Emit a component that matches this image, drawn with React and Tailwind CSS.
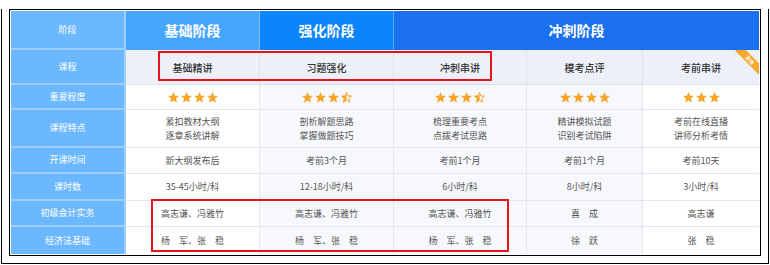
import React from "react";

const STAR = "5,0.4 6.25,3.55 9.6,3.75 7,5.95 7.85,9.3 5,7.45 2.15,9.3 3,5.95 0.4,3.75 3.75,3.55";

function Star({ half }) {
  if (half) {
    return (
      <svg width="11" height="11" viewBox="0 0 10 10">
        <defs>
          <clipPath id="halfclip">
            <rect x="0" y="0" width="5" height="10" />
          </clipPath>
        </defs>
        <polygon points={STAR} fill="none" stroke="#f4a426" strokeWidth="0.9" strokeLinejoin="round" />
        <polygon points={STAR} fill="#f4a426" clipPath="url(#halfclip)" />
      </svg>
    );
  }
  return (
    <svg width="11" height="11" viewBox="0 0 10 10">
      <polygon points={STAR} fill="#f4a426" stroke="#f4a426" strokeWidth="0.4" strokeLinejoin="round" />
    </svg>
  );
}

function Stars({ full, half }) {
  const arr = [];
  for (let i = 0; i < full; i++) arr.push(<Star key={i} />);
  if (half) arr.push(<Star key="h" half />);
  return <div className="flex items-center gap-[2px]">{arr}</div>;
}

const labels = ["重要程度", "课程特点", "开课时间", "课时数", "初级会计实务", "经济法基础"];

const data = [
  [
    <Stars full={4} />,
    <Stars full={3} half />,
    <Stars full={3} half />,
    <Stars full={4} />,
    <Stars full={3} />,
  ],
  [
    ["紧扣教材大纲", "逐章系统讲解"],
    ["剖析解题思路", "掌握做题技巧"],
    ["梳理重要考点", "点拨考试思路"],
    ["精讲模拟试题", "识别考试陷阱"],
    ["考前在线直播", "讲师分析考情"],
  ],
  ["新大纲发布后", "考前3个月", "考前1个月", "考前1个月", "考前10天"],
  ["35-45小时/科", "12-18小时/科", "6小时/科", "8小时/科", "3小时/科"],
  ["高志谦、冯雅竹", "高志谦、冯雅竹", "高志谦、冯雅竹", "喜\u3000成", "高志谦"],
  ["杨\u3000军、张\u3000稳", "杨\u3000军、张\u3000稳", "杨\u3000军、张\u3000稳", "徐\u3000跃", "张\u3000稳"],
];

const colBg = ["bg-white", "bg-[#f7f8fb]", "bg-[#f7f8fb]", "bg-[#f7f8fb]", "bg-white"];

export default function App() {
  return (
    <div className="w-[770px] h-[265px] bg-white pt-[9px] pl-[1px] font-['Noto_Sans_CJK_SC',sans-serif]">
      <div className="w-[768px] h-[255px] border-x border-b border-black">
        <div className="ml-[7px] w-[752px] h-[247px] border border-black p-px">
          <div className="relative grid grid-cols-[115px_134px_134px_133px_116px_116px] grid-rows-[39px_35px_25px_38px_26px_27px_26px_27px] w-[748px] h-[243px] border-r border-b border-[#dde1ea]">
            {/* header row */}
            <div className="flex items-center justify-center bg-[#6bb8ff] text-white text-[9px] border-r-2 border-b-2 border-[#9fcfff]">阶段</div>
            <div className="flex items-center justify-center bg-[#46a6ff] text-white text-[14px] font-bold border-r border-[#7cc0ff]">基础阶段</div>
            <div className="flex items-center justify-center bg-[#0a85fc] text-white text-[14px] font-bold border-r border-[#5aa8ff]">强化阶段</div>
            <div className="col-span-3 flex items-center justify-center bg-[#1b70f0] text-white text-[14px] font-bold">冲刺阶段</div>

            {/* course row */}
            <div className="flex items-center justify-center bg-[#6bb8ff] text-white text-[9px] border-r-2 border-b-2 border-[#9fcfff]">课程</div>
            {["基础精讲", "习题强化", "冲刺串讲", "模考点评", "考前串讲"].map((t, i) => (
              <div
                key={t}
                className={
                  "relative overflow-hidden flex items-center justify-center bg-[#eef0f7] text-[#333] text-[10px] font-medium border-b border-[#dfe2ea] " +
                  (i < 4 ? "border-r" : "")
                }
              >
                {t}
                {i === 4 && (
                  <div className="absolute -right-[8px] top-[6px] w-[34px] h-[8px] rotate-45 bg-[#f5a92f] text-white text-[5px] leading-[8px] text-center">
                    直播
                  </div>
                )}
              </div>
            ))}

            {/* data rows */}
            {labels.map((label, r) => (
              <React.Fragment key={label}>
                <div
                  className={
                    "flex items-center justify-center bg-[#6bb8ff] text-white text-[9px] border-r-2 border-[#9fcfff] " +
                    (r < labels.length - 1 ? "border-b-2" : "")
                  }
                >
                  {label}
                </div>
                {data[r].map((cell, c) => (
                  <div
                    key={c}
                    className={
                      "flex flex-col items-center justify-center text-[#555] text-[9px] leading-[14px] " +
                      colBg[c] +
                      " border-[#e4e6ee] " +
                      (c < 4 ? "border-r " : "") +
                      (r < labels.length - 1 ? "border-b" : "")
                    }
                  >
                    {Array.isArray(cell) ? cell.map((l) => <span key={l}>{l}</span>) : cell}
                  </div>
                ))}
              </React.Fragment>
            ))}

            {/* highlight boxes */}
            <div className="absolute left-[147px] top-[40px] w-[334px] h-[30px] border-2 border-[#e8121b] pointer-events-none" />
            <div className="absolute left-[140px] top-[188px] w-[358px] h-[53px] border-2 border-[#e8121b] pointer-events-none" />
          </div>
        </div>
      </div>
    </div>
  );
}
